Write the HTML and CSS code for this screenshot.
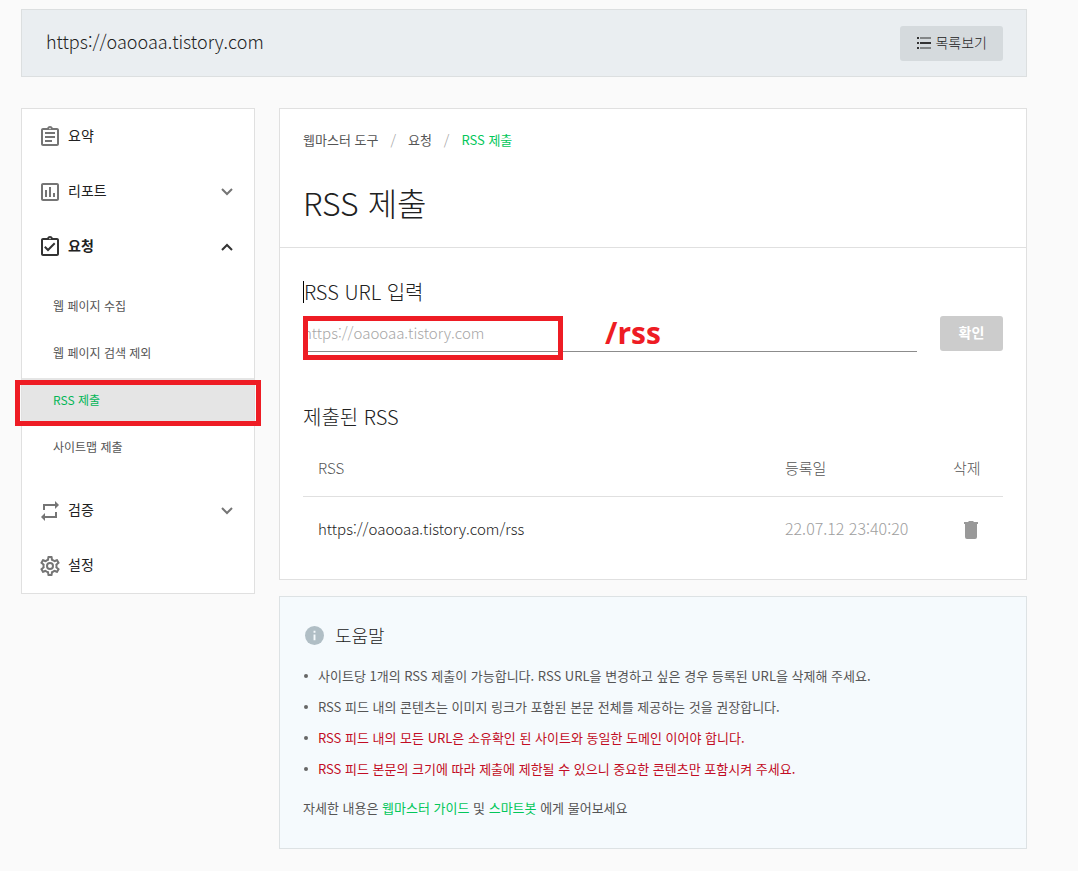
FILE: index.html
```html
<!DOCTYPE html>
<html lang="ko">
<head>
<meta charset="utf-8">
<title>RSS 제출</title>
<link rel="stylesheet" href="styles.css">
</head>
<body>
<div class="page">
  <header class="site-bar">
    <span class="site-url">https://oaooaa.tistory.com</span>
    <button type="button" class="list-button">
      <svg class="list-icon" viewBox="0 0 14 12" aria-hidden="true"><path d="M0 0h2v2H0zM3 .5h11v1H3zM0 5h2v2H0zM3 5h11v2H3zM0 10h2v2H0zM3 10.500h11v1H3z"/></svg>
      <span class="list-text">목록보기</span>
    </button>
  </header>

  <div class="columns">
    <nav class="sidebar">
      <a class="menu-row" href="#">
        <svg class="menu-icon" viewBox="0 0 24 24" aria-hidden="true"><path d="M7 15h7v2H7zm0-4h10v2H7zm0-4h10v2H7zm12-4h-4.180C14.400 1.840 13.300 1 12 1s-2.400.840-2.820 2H5c-1.100 0-2 .9-2 2v14c0 1.100.9 2 2 2h14c1.100 0 2-.9 2-2V5c0-1.100-.9-2-2-2zm-7-.2a.75.75 0 1 1 0 1.500.75.75 0 0 1 0-1.500zM19 19H5V5h14z"/></svg>
        <span class="menu-label">요약</span>
      </a>
      <a class="menu-row" href="#">
        <svg class="menu-icon" viewBox="0 0 24 24" aria-hidden="true"><path d="M19 3H5c-1.100 0-2 .9-2 2v14c0 1.100.9 2 2 2h14c1.100 0 2-.9 2-2V5c0-1.100-.9-2-2-2zm0 16H5V5h14zM7 10h2v7H7zm4-3h2v10h-2zm4 6h2v4h-2z"/></svg>
        <span class="menu-label">리포트</span>
        <svg class="chevron" viewBox="0 0 12 8" aria-hidden="true"><path d="M1 1l5 5 5-5"/></svg>
      </a>
      <a class="menu-row menu-row-open" href="#">
        <svg class="menu-icon" viewBox="0 0 24 24" aria-hidden="true"><path d="M19 3h-4.180C14.400 1.840 13.300 1 12 1s-2.400.840-2.820 2H5c-1.100 0-2 .9-2 2v14c0 1.100.9 2 2 2h14c1.100 0 2-.9 2-2V5c0-1.100-.9-2-2-2zm-7-.2a.75.75 0 1 1 0 1.500.75.75 0 0 1 0-1.500zM19 19H5V5h14zM17.400 9L16 7.600l-6 6-2.500-2.500-1.400 1.400L10 16.400z"/></svg>
        <span class="menu-label">요청</span>
        <svg class="chevron" viewBox="0 0 12 8" aria-hidden="true"><path d="M1 7l5-5 5 5"/></svg>
      </a>
      <div class="submenu">
        <a class="sub-row" href="#">웹 페이지 수집</a>
        <a class="sub-row" href="#">웹 페이지 검색 제외</a>
        <a class="sub-row sub-row-active" href="#">RSS 제출<span class="menu-mark"></span></a>
        <a class="sub-row" href="#">사이트맵 제출</a>
      </div>
      <a class="menu-row" href="#">
        <svg class="menu-icon" viewBox="0 0 24 24" aria-hidden="true"><path d="M7 7h10v3l4-4-4-4v3H5v6h2zm10 10H7v-3l-4 4 4 4v-3h12v-6h-2z"/></svg>
        <span class="menu-label">검증</span>
        <svg class="chevron" viewBox="0 0 12 8" aria-hidden="true"><path d="M1 1l5 5 5-5"/></svg>
      </a>
      <a class="menu-row" href="#">
        <svg class="menu-icon" viewBox="0 0 24 24" aria-hidden="true"><path d="M19.430 12.980c.040-.320.070-.640.070-.980s-.030-.660-.070-.980l2.110-1.650c.190-.150.240-.420.120-.640l-2-3.460a.5.5 0 0 0-.610-.220l-2.490 1a7.300 7.300 0 0 0-1.690-.980l-.380-2.650A.49.49 0 0 0 14 2h-4a.49.49 0 0 0-.490.420l-.380 2.650c-.610.250-1.170.590-1.690.980l-2.490-1a.5.5 0 0 0-.610.220l-2 3.460c-.130.220-.070.490.120.640l2.110 1.650a7.900 7.900 0 0 0 0 1.960l-2.110 1.650c-.190.150-.240.420-.120.640l2 3.460c.120.220.390.300.610.220l2.490-1c.520.400 1.080.730 1.690.980l.380 2.650c.030.240.240.420.490.420h4c.250 0 .460-.180.490-.420l.380-2.650c.610-.250 1.170-.590 1.690-.980l2.490 1c.230.090.490 0 .610-.220l2-3.460a.5.5 0 0 0-.120-.640zm-1.980-1.710c.040.310.050.520.050.730s-.020.430-.050.730l-.140 1.130.890.700 1.080.840-.7 1.210-1.270-.510-1.040-.420-.9.680c-.430.320-.840.560-1.250.730l-1.060.430-.160 1.130-.2 1.350h-1.400l-.190-1.350-.160-1.130-1.060-.430c-.430-.180-.830-.410-1.230-.710l-.910-.7-1.060.430-1.270.510-.7-1.210 1.080-.840.890-.7-.140-1.130c-.030-.310-.050-.540-.050-.740s.020-.430.050-.730l.140-1.130-.890-.7-1.080-.840.7-1.210 1.270.510 1.040.420.9-.680c.430-.320.840-.560 1.250-.730l1.060-.430.160-1.130.2-1.350h1.390l.190 1.350.160 1.130 1.060.430c.430.180.830.410 1.230.710l.910.7 1.060-.430 1.270-.510.7 1.210-1.070.850-.890.7zM12 8a4 4 0 1 0 0 8 4 4 0 0 0 0-8zm0 6a2 2 0 1 1 0-4 2 2 0 0 1 0 4z"/></svg>
        <span class="menu-label">설정</span>
      </a>
    </nav>

    <main class="content">
      <section class="card">
        <div class="card-head">
          <div class="breadcrumb">
            <a href="#">웹마스터 도구</a><span class="slash">/</span><a href="#">요청</a><span class="slash">/</span><a class="current" href="#">RSS 제출</a>
          </div>
          <h1 class="page-title">RSS 제출</h1>
        </div>
        <div class="card-body">
          <label class="section-title url-label" for="rss-url">RSS URL 입력</label>
          <div class="url-row">
            <div class="url-field">
              <input id="rss-url" class="url-input" type="text" placeholder="https://oaooaa.tistory.com">
              <span class="field-mark"></span>
              <span class="suffix-mark">/rss</span>
            </div>
            <button type="button" class="confirm-button">확인</button>
          </div>
          <h2 class="section-title list-title">제출된 RSS</h2>
          <table class="rss-table">
            <thead><tr><th>RSS</th><th class="col-date">등록일</th><th class="col-delete">삭제</th></tr></thead>
            <tbody><tr>
              <td>https://oaooaa.tistory.com/rss</td>
              <td class="col-date date">22.07.12 23:40:20</td>
              <td class="col-delete"><button type="button" class="delete-button" aria-label="삭제"><svg class="trash" viewBox="0 0 14 18" aria-hidden="true"><path d="M0 1h4l1-1h4l1 1h4v2H0zM1 3h12v13q0 2-2 2H3q-2 0-2-2z"/></svg></button></td>
            </tr></tbody>
          </table>
        </div>
      </section>

      <section class="help">
        <h2 class="help-title">
          <svg class="info" viewBox="0 0 20 20" aria-hidden="true"><circle cx="10" cy="10" r="10"/><path d="M9 5h2v2H9zM9 9h2v6H9z"/></svg>
          도움말
        </h2>
        <ul class="help-list">
          <li>사이트당 1개의 RSS 제출이 가능합니다. RSS URL을 변경하고 싶은 경우 등록된 URL을 삭제해 주세요.</li>
          <li>RSS 피드 내의 콘텐츠는 이미지 링크가 포함된 본문 전체를 제공하는 것을 권장합니다.</li>
          <li><span class="warn">RSS 피드 내의 모든 URL은 소유확인 된 사이트와 동일한 도메인 이어야 합니다.</span></li>
          <li><span class="warn">RSS 피드 본문의 크기에 따라 제출에 제한될 수 있으니 중요한 콘텐츠만 포함시켜 주세요.</span></li>
        </ul>
        <p class="help-more">자세한 내용은 <a href="#">웹마스터 가이드</a> 및 <a href="#">스마트봇</a> 에게 물어보세요</p>
      </section>
    </main>
  </div>
</div>
</body>
</html>
```
FILE: styles.css
```css
* { box-sizing: border-box; }

body {
  margin: 0;
  background: #fafafa;
  color: #212121;
  font-family: "Noto Sans CJK KR", sans-serif;
  font-size: 14px;
  font-weight: 300;
  line-height: 20px;
}

a { color: inherit; text-decoration: none; }
button, input { font: inherit; }
h1, h2, p, ul { margin: 0; padding: 0; font-weight: 300; }

.page { padding: 9px 51px 22px 21px; }

.site-bar {
  display: flex;
  align-items: center;
  justify-content: space-between;
  height: 68px;
  padding: 0 23px 0 24px;
  border: 1px solid #dcdfe0;
  background: #eaeef1;
}
.site-url { padding-bottom: 4px; font-size: 18px; }
.list-button {
  display: flex;
  align-items: center;
  gap: 4px;
  height: 35px;
  padding: 0 16px 0 17px;
  border: 0;
  border-radius: 3px;
  background: #d5dadd;
  color: #212121;
}
.list-icon { width: 14px; height: 12px; fill: #333; }
.list-text { padding-bottom: 2px; }

.columns {
  display: flex;
  align-items: flex-start;
  gap: 24px;
  margin-top: 31px;
}

.sidebar {
  flex: 0 0 234px;
  border: 1px solid #e0e0e0;
  background: #fff;
}
.menu-row {
  display: flex;
  align-items: center;
  height: 55px;
  padding: 0 21px 0 16px;
  font-weight: 400;
}
.menu-icon { width: 24px; height: 24px; margin-right: 6px; fill: #757575; }
.menu-label { flex: 1; padding-bottom: 4px; }
.menu-row-open { font-weight: 700; }
.menu-row-open .menu-icon { fill: #333; }
.chevron { width: 12px; height: 8px; fill: none; stroke: #757575; stroke-width: 2; }
.menu-row-open .chevron { stroke: #333; }

.submenu { padding: 10px 0 11px; }
.sub-row {
  display: flex;
  align-items: center;
  height: 47px;
  padding: 0 31px 3px;
  color: #555;
  font-size: 12px;
  font-weight: 400;
}
.sub-row-active { position: relative; background: #e5e5e5; color: #03b657; }
.menu-mark {
  position: absolute;
  inset: 2px -7px -1px;
  border: 5px solid #ee1c24;
}

.content { flex: 1; min-width: 0; }
.card { border: 1px solid #e0e0e0; background: #fff; }
.card-head { padding: 21px 23px 21px; border-bottom: 1px solid #e0e0e0; }
.breadcrumb { display: flex; color: #555; font-weight: 400; font-size: 13px; }
.slash { margin: 0 12px; color: #9e9e9e; font-weight: 300; font-size: 14px; }
.breadcrumb .current { color: #03c75a; }
.page-title { margin-top: 28px; font-size: 32px; line-height: 48px; }

.card-body { padding: 33px 23px 18px; }
.section-title { display: block; font-size: 20px; line-height: 30px; }
.url-row { display: flex; align-items: flex-start; gap: 23px; margin-top: 13px; }
.url-label { width: max-content; border-left: 1px solid #000; line-height: 22px; }
.url-field { position: relative; flex: 1; }
.url-input {
  display: block;
  width: 100%;
  height: 36px;
  padding: 0 0 2px;
  border: 0;
  border-bottom: 1px solid #8c8c8c;
  background: none;
  font-size: 15px;
}
.url-input::placeholder { color: #a6a6a6; opacity: 1; }
.field-mark {
  position: absolute;
  top: 0;
  left: 0;
  width: 260px;
  height: 44px;
  border: 5px solid #ee1c24;
}
.suffix-mark {
  position: absolute;
  top: 0;
  left: 302px;
  color: #ee1c24;
  font: 700 30px/34px "Open Sans", sans-serif;
}
.confirm-button {
  width: 63px;
  height: 35px;
  padding: 0 0 4px;
  border: 0;
  border-radius: 3px;
  background: #ccc;
  color: #fff;
  font-weight: 700;
}
.list-title { margin-top: 50px; }

.rss-table { width: 100%; margin-top: 8px; border-collapse: collapse; font-size: 15px; }
.rss-table th, .rss-table td { padding: 0 15px; text-align: left; font-weight: 300; }
.rss-table th { height: 56px; border-bottom: 1px solid #e0e0e0; color: #555; }
.rss-table td { height: 65px; }
.rss-table .col-date { width: 168px; }
.rss-table .col-delete { width: 65px; }
.rss-table .date { padding-bottom: 2px; color: #9e9e9e; font-size: 16px; white-space: nowrap; }
.delete-button { display: block; margin-left: 11px; padding: 2px 0 0; border: 0; background: none; }
.trash { display: block; width: 14px; height: 18px; fill: #999; }

.help {
  margin-top: 16px;
  padding: 24px 23px 30px;
  border: 1px solid #dde2e4;
  background: #f5fafd;
  color: #555;
}
.help-title { display: flex; align-items: center; gap: 11px; padding-left: 2px; color: #212121; font-size: 18px; line-height: 28px; }
.info { width: 19px; height: 19px; fill: #b0bec5; }
.info path { fill: #f5fafd; }
.help-list { margin-top: 11px; padding-left: 15px; list-style: none; font-size: 13px; line-height: 31px; font-weight: 400; }
.help-list li::before {
  content: "";
  display: inline-block;
  width: 4px;
  height: 4px;
  margin: 0 10px 3px -14px;
  border-radius: 2px;
  background: #666;
}
.warn { color: #c20c24; }
.help-more { margin-top: 14px; font-size: 13px; font-weight: 400; }
.help-more a { color: #03c75a; }
```
